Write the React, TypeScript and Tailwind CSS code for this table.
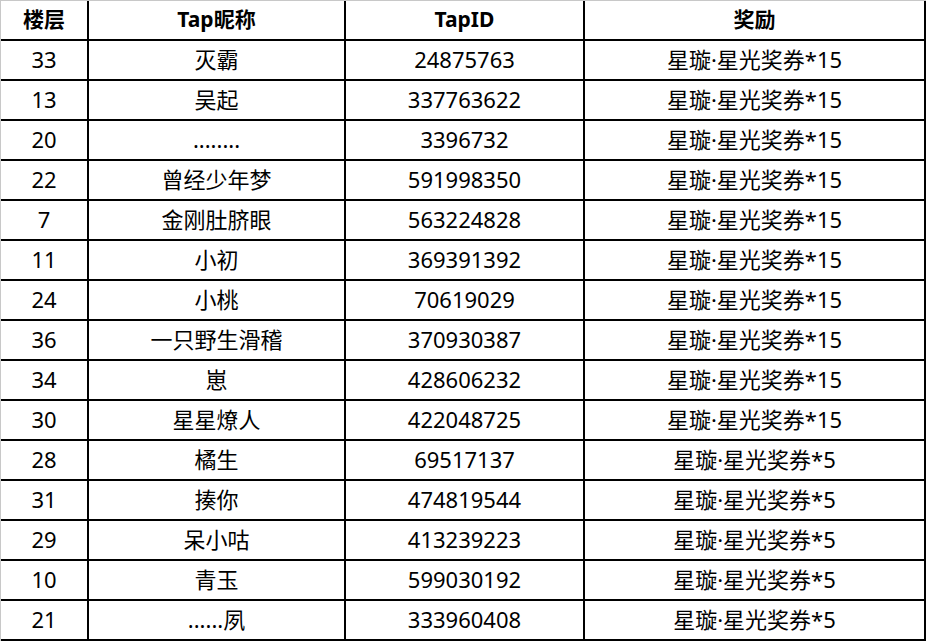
import React from "react";

const rows: [string, string, string, string][] = [
  ["33", "灭霸", "24875763", "星璇·星光奖券*15"],
  ["13", "吴起", "337763622", "星璇·星光奖券*15"],
  ["20", "........", "3396732", "星璇·星光奖券*15"],
  ["22", "曾经少年梦", "591998350", "星璇·星光奖券*15"],
  ["7", "金刚肚脐眼", "563224828", "星璇·星光奖券*15"],
  ["11", "小初", "369391392", "星璇·星光奖券*15"],
  ["24", "小桃", "70619029", "星璇·星光奖券*15"],
  ["36", "一只野生滑稽", "370930387", "星璇·星光奖券*15"],
  ["34", "崽", "428606232", "星璇·星光奖券*15"],
  ["30", "星星燎人", "422048725", "星璇·星光奖券*15"],
  ["28", "橘生", "69517137", "星璇·星光奖券*5"],
  ["31", "揍你", "474819544", "星璇·星光奖券*5"],
  ["29", "呆小咕", "413239223", "星璇·星光奖券*5"],
  ["10", "青玉", "599030192", "星璇·星光奖券*5"],
  ["21", "......夙", "333960408", "星璇·星光奖券*5"],
];

const header = ["楼层", "Tap昵称", "TapID", "奖励"];

const cell =
  "h-[40px] flex items-center justify-center pb-[2px] border-r-2 border-b-2 border-black text-[22px] text-black leading-none";

export default function App() {
  return (
    <div
      className="w-[927px] h-[641px] bg-white"
      style={{ fontFamily: '"Noto Sans", "Noto Sans CJK SC", sans-serif' }}
    >
      <div className="w-[926px] border-l border-t border-[#c8c8c8]">
        <div className="grid grid-cols-[88px_257px_239px_341px]">
          {header.map((h) => (
            <div key={h} className={`${cell} font-bold !text-[21px]`}>
              {h}
            </div>
          ))}
          {rows.map((r, i) => (
            <React.Fragment key={i}>
              {r.map((c, j) => (
                <div key={j} className={cell}>
                  {c}
                </div>
              ))}
            </React.Fragment>
          ))}
        </div>
      </div>
    </div>
  );
}
